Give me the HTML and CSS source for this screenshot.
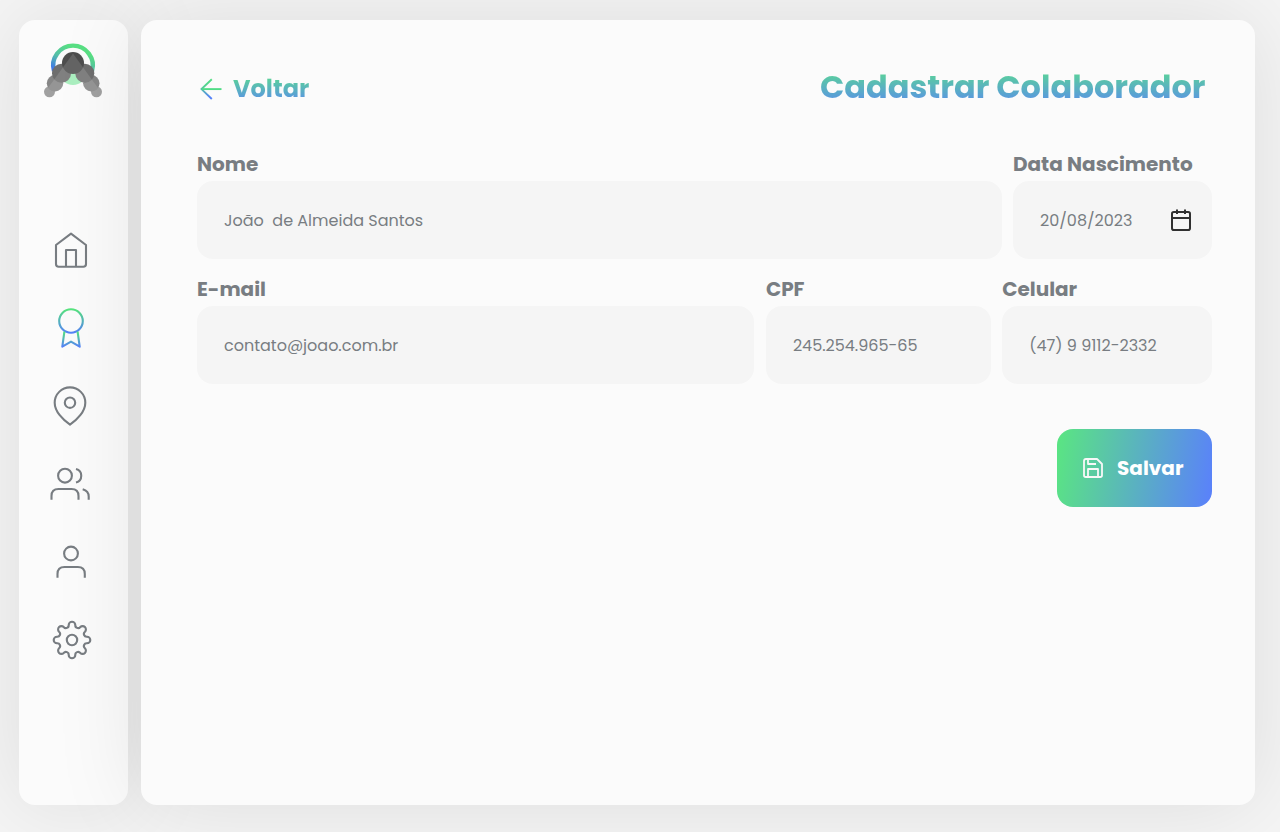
FILE: index.html
```html
<!DOCTYPE html>
<html lang="pt-BR">
<head>
<meta charset="utf-8">
<title>Cadastrar Colaborador</title>
<link rel="stylesheet" href="styles.css">
</head>
<body>
<div class="app">
  <aside class="sidebar">
    <svg class="logo" viewBox="43 42 60 57">
      <defs>
        <linearGradient id="ring" x1="0" y1=".9" x2=".55" y2=".1"><stop offset="0" stop-color="#3f78e8"/><stop offset=".5" stop-color="#55bfa8"/><stop offset="1" stop-color="#58df83"/></linearGradient>
        <clipPath id="people"><circle cx="73" cy="63" r="11"/><circle cx="61.5" cy="73.3" r="9.5"/><circle cx="84.8" cy="73.3" r="9.5"/><circle cx="55" cy="83.3" r="8.2"/><circle cx="91.3" cy="83.3" r="8.2"/></clipPath>
      </defs>
      <circle cx="73" cy="72" r="13" fill="#abefc0"/>
      <path d="M54 71A19.8 19.8 0 1 1 92 71" fill="none" stroke="url(#ring)" stroke-width="4.4"/>
      <g fill="#a0a0a0"><circle cx="49.5" cy="91.8" r="5.5"/><circle cx="96.5" cy="91.8" r="5.5"/></g>
      <g fill="#868686"><circle cx="55" cy="83.3" r="8.2"/><circle cx="91.3" cy="83.3" r="8.2"/></g>
      <g fill="#6e6e6e"><circle cx="61.5" cy="73.3" r="9.5"/><circle cx="84.8" cy="73.3" r="9.5"/></g>
      <circle cx="73" cy="63" r="11" fill="#4d4d4d"/>
      <path clip-path="url(#people)" d="M73 53.5L48 88L60 98L86 98L98 88Z" fill="#fff" fill-opacity=".13"/>
    </svg>
    <nav class="nav">
      <svg class="icon" viewBox="19 226 109 48"><path d="M56 245L71 233.7L86 245V264Q86 266.7 83.3 266.7H58.7Q56 266.7 56 264ZM66 266V250H76V266"/></svg>
      <svg class="icon active" viewBox="19 304 109 48">
        <defs>
          <linearGradient id="medal" x1="0" y1="0" x2="0" y2="1"><stop offset="0" stop-color="#56e47d"/><stop offset="1" stop-color="#5582f8"/></linearGradient>
        </defs>
        <circle cx="71" cy="321" r="11.8"/><path d="M64.4 331.6L62.3 346.7L71 341.6L79.7 346.7L77.6 331.6"/>
      </svg>
      <svg class="icon" viewBox="19 382 109 48"><path d="M85.3 402.7C85.3 411.5 77 420 70 424.6C63 420 54.7 411.5 54.7 402.7A15.3 15.3 0 0 1 85.3 402.7Z"/><circle cx="70" cy="402.7" r="5.2"/></svg>
      <svg class="icon" viewBox="19 460 109 48"><circle cx="65" cy="475.7" r="6.9"/><path d="M51.5 499.7V496Q51.5 489 58.5 489H71.5Q78.5 489 78.5 496V499.7M76 469A6.9 6.9 0 0 1 76 482.4M82.7 489.3Q88.7 491 88.7 496.5V499.7"/></svg>
      <svg class="icon" viewBox="19 538 109 48"><circle cx="71" cy="553.5" r="6.9"/><path d="M57.5 577.7V574Q57.5 567 64.5 567H77.8Q84.8 567 84.8 574V577.7"/></svg>
      <svg class="icon" viewBox="19 616 109 48"><g transform="translate(72 640)"><circle r="5.2"/><path d="M-3.3 -15A3.3 3.3 0 0 1 3.3 -15A2.8 2.8 0 0 0 8.27 -12.94A3.3 3.3 0 0 1 12.94 -8.27A2.8 2.8 0 0 0 15 -3.3A3.3 3.3 0 0 1 15 3.3A2.8 2.8 0 0 0 12.94 8.27A3.3 3.3 0 0 1 8.27 12.94A2.8 2.8 0 0 0 3.3 15A3.3 3.3 0 0 1 -3.3 15A2.8 2.8 0 0 0 -8.27 12.94A3.3 3.3 0 0 1 -12.94 8.27A2.8 2.8 0 0 0 -15 3.3A3.3 3.3 0 0 1 -15 -3.3A2.8 2.8 0 0 0 -12.94 -8.27A3.3 3.3 0 0 1 -8.27 -12.94A2.8 2.8 0 0 0 -3.3 -15Z"/></g></svg>
    </nav>
  </aside>
  <main class="panel">
    <header class="header">
      <a class="back">
        <svg class="arrow" viewBox="0 0 24 24">
          <defs>
            <linearGradient id="shaft" x1="0" y1="0" x2="0" y2="1"><stop offset="0" stop-color="#56df85"/><stop offset=".4" stop-color="#56cf95"/><stop offset=".9" stop-color="#5582f8"/></linearGradient>
          </defs>
          <path d="M12.8 2.2L2.5 12.1L12.8 22" fill="none" stroke="url(#shaft)" stroke-width="1.9"/><path d="M3.2 12.1H22.5" stroke="#50dc85" stroke-width="1.9"/>
        </svg>
        <span class="back-text">Voltar</span>
      </a>
      <h1 class="title">Cadastrar Colaborador</h1>
    </header>
    <form class="form">
      <div class="row row-person">
        <div class="field"><label class="label">Nome</label><div class="input"><span>João&nbsp; de Almeida Santos</span></div></div>
        <div class="field"><label class="label">Data Nascimento</label><div class="input input-date"><span>20/08/2023</span>
          <svg class="calendar" viewBox="0 0 24 24"><rect x="3" y="4" width="18" height="18" rx="1.8"/><path d="M3 10H21M8 1.5V6M16 1.5V6"/></svg></div></div>
      </div>
      <div class="row row-contact">
        <div class="field"><label class="label">E-mail</label><div class="input"><span>contato@joao.com.br</span></div></div>
        <div class="field"><label class="label">CPF</label><div class="input"><span>245.254.965-65</span></div></div>
        <div class="field"><label class="label">Celular</label><div class="input"><span>(47) 9 9112-2332</span></div></div>
      </div>
      <button class="save" type="button">
        <svg class="disk" viewBox="0 0 22 22"><path d="M2 4Q2 2 4 2H15L20 7V18.2Q20 20 18.2 20H3.8Q2 20 2 18.2ZM6 20V12H16V20M6 2V7H14"/></svg>
        <span>Salvar</span>
      </button>
    </form>
  </main>
</div>
</body>
</html>
```
FILE: styles.css
```css
* { box-sizing: border-box; }
body {
  margin: 0;
  background: #f5f5f5;
  font-family: Poppins, Inter, sans-serif;
  color: #787d82;
}
.app { display: flex; gap: 13px; width: 1280px; height: 832px; padding: 20px 25px 27px 19px; overflow: hidden; }
.sidebar, .panel { border-radius: 16px; background: #fbfbfb; box-shadow: 0 0 90px rgba(0, 0, 0, .1); }
.sidebar { width: 109px; flex: none; display: flex; flex-direction: column; }
.logo { width: 60px; height: 57px; margin: 22px 0 0 24px; }
.nav { display: flex; flex-direction: column; gap: 30px; margin-top: 127px; }
.icon { display: block; width: 109px; height: 48px; fill: none; stroke: #787d82; stroke-width: 2.1; stroke-linecap: butt; stroke-linejoin: round; }
.active { stroke: url(#medal); }
.panel { flex: 1; padding: 44px 43px 0 56px; }
.header { display: flex; justify-content: space-between; align-items: center; height: 46px; padding: 0 6.5px 0 2px; }
.back { display: flex; align-items: center; gap: 10px; padding-top: 3px; }
.arrow { width: 24px; height: 24px; }
.title, .back-text {
  margin: 0;
  font-weight: 700;
  white-space: nowrap;
  color: transparent;
  background: linear-gradient(180deg, #5ae681, #5a80fc);
  background-clip: text;
  -webkit-background-clip: text;
}
.title { font-size: 32px; line-height: 48px; }
.back-text { font-size: 24px; line-height: 36px; }
.form { display: flex; flex-direction: column; margin-top: 38px; }
.row { display: grid; }
.row-person { grid-template-columns: 804.5px 199px; column-gap: 11.5px; }
.row-contact { grid-template-columns: 557.4px 224.8px 209.8px; column-gap: 11.5px; margin-top: 14px; }
.label { display: block; height: 33px; font-size: 20px; font-weight: 700; line-height: 32px; white-space: nowrap; }
.input { display: flex; align-items: center; height: 78px; padding: 2px 20px 0 27px; border-radius: 16px; background: #f5f5f5; font-size: 16px; line-height: 24px; white-space: nowrap; font-weight: 400; }
.input-date { justify-content: space-between; }
.calendar { width: 24px; height: 24px; margin: -2px -1px 0 0; fill: none; stroke: #303030; stroke-width: 2; }
.save { display: flex; align-items: center; gap: 13px; align-self: flex-end; width: 155px; height: 78px; margin-top: 45px; padding: 0 0 0 25px; border: 0; border-radius: 16px; background: linear-gradient(99deg, #5ae681, #5a80fc); color: #fff; font: inherit; font-size: 20px; font-weight: 700; }
.disk { width: 22px; height: 22px; fill: none; stroke: #f8f8f8; stroke-width: 1.8; stroke-linejoin: round; }
```
